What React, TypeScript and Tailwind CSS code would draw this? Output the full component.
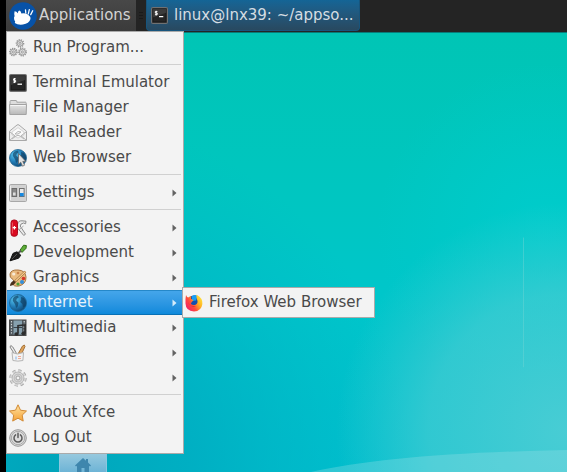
import type { ReactNode } from "react";

function Svg({ children, size = 18 }: { children: ReactNode; size?: number }) {
  return (
    <svg width={size} height={size} viewBox="0 0 18 18" className="shrink-0" aria-hidden="true">
      {children}
    </svg>
  );
}

function Cog({ x, y, r }: { x: number; y: number; r: number }) {
  return (
    <g fill="none" stroke="#949494">
      <circle cx={x} cy={y} r={r} strokeWidth="1.6" strokeDasharray="1.2 0.9" />
      <circle cx={x} cy={y} r={r - 0.7} fill="#dcdcdc" strokeWidth="0.8" />
      <circle cx={x} cy={y} r="1" fill="#f8f8f8" strokeWidth="0.9" />
    </g>
  );
}

const RunIcon = () => (
  <Svg>
    <Cog x={11} y={4.4} r={3.5} />
    <Cog x={4.4} y={13} r={3.5} />
    <Cog x={13.4} y={13} r={3.7} />
  </Svg>
);

const TerminalIcon = ({ size = 18 }: { size?: number }) => (
  <Svg size={size}>
    <rect x="0.5" y="0.5" width="17" height="17" rx="1" fill="#555" stroke="#747474" />
    <rect x="2" y="2" width="14" height="14" fill="#252525" stroke="#171717" />
    <path d="M2 2h14v4L2 11z" fill="#454545" opacity="0.7" />
    <path d="M6.8 4.8H4.6v1.6h2v1.7H4.2M5.5 4v5" fill="none" stroke="#fff" strokeWidth="1" />
    <path d="M8.5 10.2h4.5" stroke="#fff" strokeWidth="1.3" />
  </Svg>
);

const FolderIcon = () => (
  <Svg>
    <defs>
      <linearGradient id="folder" x2="0" y2="1">
        <stop stopColor="#e5e5e5" />
        <stop offset="1" stopColor="#b8b8b8" />
      </linearGradient>
    </defs>
    <path d="M1 7V2.5q0-1 1-1h5q.8 0 .8 1v.7h8.7q.7 0 .7 1V7" fill="#ddd" stroke="#a3a3a3" />
    <path d="M.5 5.5h17l-.3 10H.8z" fill="url(#folder)" stroke="#a3a3a3" />
    <path d="M1.5 6.5h15" stroke="#f5f5f5" />
  </Svg>
);

const MailIcon = () => (
  <Svg>
    <path d="M.5 7.2 8 1q1-.7 2 0l7.5 6.2v9.3H.5z" fill="#eee" stroke="#a8a8a8" />
    <path d="M3 8 8.5 4h1L15 8v3l-6 3-6-3z" fill="#fafafa" stroke="#ccc" strokeWidth="0.8" />
    <path d="m1 8 5 3.8L1 16m16-8-5 3.8L17 16M3 15l4-3q2-1.2 4 0l4 3M6 10q3-4 6-2-3 3-6 2Z" fill="none" stroke="#b5b5b5" />
  </Svg>
);

const Globe = () => (
  <>
    <defs>
      <radialGradient id="globe" cx="0.3" cy="0.28" r="0.85">
        <stop stopColor="#58c8f2" />
        <stop offset="0.5" stopColor="#237fb9" />
        <stop offset="1" stopColor="#0b3d68" />
      </radialGradient>
    </defs>
    <circle cx="9" cy="9" r="8.5" fill="url(#globe)" stroke="#1d638f" strokeWidth="0.8" />
    <path d="M5.5 2.5 9 1.6l.7 2-2 1.2-.4 2 2.2 2-.8 3.8-1.6 1.4-.9-3.6-2.4-3.6.2-2.4zM12 3l3 1 2 4-.5 4-2.4 1.6-.7-3.6-2.2-2 1-2.4z" fill="#103d61" opacity="0.65" />
  </>
);

const WebIcon = () => (
  <Svg>
    <Globe />
    <path d="M9.5 4.5v10.7l2.2-2 1.8 4 2.1-1-1.8-3.8h3z" fill="#e2e2e2" stroke="#666" strokeWidth="0.8" />
  </Svg>
);

const InternetIcon = () => (
  <Svg>
    <Globe />
  </Svg>
);

const SettingsIcon = () => (
  <Svg>
    <rect x="0.5" y="0.5" width="17" height="17" rx="1" fill="#d2d2d2" stroke="#a8a8a8" />
    <path d="M1.5 2v14" stroke="#eee" />
    <rect x="3" y="4.5" width="4.6" height="8" fill="#888" stroke="#6b6b6b" />
    <path d="M4 8.5h2.6v3H4z" fill="#ddd" />
    <rect x="10.5" y="4.5" width="4.6" height="8" fill="#e9e9e9" stroke="#707070" />
    <path d="M11 9h3.7v3.3H11z" fill="#1688df" />
  </Svg>
);

const AccessoriesIcon = () => (
  <Svg>
    <path d="M8.5 5.5Q9 1.5 13 1.8l4 .4-.4 2.6-2-.8q-3.4.6-3.4 3l5.3 8.2-1.8 1.2L8.5 9" fill="#eaeaea" stroke="#8b8b8b" />
    <path d="M10 11q2-2 4.5-4" stroke="#aaa" fill="none" />
    <rect x="2" y="1" width="6.5" height="16.3" rx="2.8" fill="#da0a20" stroke="#a80a1c" />
    <path d="M3.4 3.5v11" stroke="#f05560" />
    <path d="M5.4 7v3.4M3.7 8.7h3.4" stroke="#fff" strokeWidth="1.2" />
  </Svg>
);

const DevelopmentIcon = () => (
  <Svg>
    <path d="m11 6.2 3.6-5 2.8.4-.4 2.8-4 4z" fill="#5fae38" stroke="#2f6d18" />
    <path d="m9 9.2 3-2.4" stroke="#555" strokeWidth="2" />
    <path d="M1 16.8 4 9.4l4-1.6 3.8 3.4-2.2 3z" fill="#1d1d1d" stroke="#111" />
    <path d="m3 15 5-5" stroke="#666" strokeWidth="0.7" />
  </Svg>
);

const GraphicsIcon = () => (
  <Svg>
    <path d="M1 5q1-4.5 8-4 7.5.4 8 7 .3 7-7 9-6 .8-6-2.5 2-2 0-4Q.2 8.7 1 5Z" fill="#e9bb80" stroke="#a87440" />
    <circle cx="4.7" cy="5" r="1.6" fill="#f7ead9" />
    <circle cx="9" cy="4" r="1.3" fill="#c98149" />
    <circle cx="14.5" cy="9.5" r="1.8" fill="#d63628" />
    <circle cx="13" cy="13" r="2" fill="#318edb" />
    <circle cx="9" cy="15" r="1.6" fill="#4a9c32" />
    <path d="M1 17q0-4 4-5.5l1.8 2Q5 16.500 1 17Z" fill="#4a2f1c" />
    <path d="m6 12.500 10.500-10" stroke="#885a2c" strokeWidth="2.2" />
    <path d="m6.500 12 10-9.500" stroke="#ffd391" strokeWidth="1.1" />
  </Svg>
);

const MultimediaIcon = () => (
  <Svg>
    <rect x="0.5" y="1" width="16.5" height="15.500" fill="#4d565c" stroke="#4a4a4a" />
    <path d="M4.500 1.500h8.500v14H4.500z" fill="#86a0ae" />
    <path d="M4.500 8.500h8.500" stroke="#39444c" />
    <path d="M2.500 2v14M15.200 2v14" stroke="#d0d6d8" strokeWidth="1.200" strokeDasharray="1.4 1.4" />
    <path d="M9 14.500V6.800l7-1v8.200" fill="none" stroke="#2c2c2c" strokeWidth="1.600" />
    <ellipse cx="7.500" cy="15" rx="2.200" ry="1.800" fill="#2c2c2c" />
    <ellipse cx="14.500" cy="14.500" rx="2.200" ry="1.800" fill="#2c2c2c" />
  </Svg>
);

const OfficeIcon = () => (
  <Svg>
    <path d="M5.500 10 1 3l.8-1.500L3.800 3l4 7" fill="#eee" stroke="#858585" />
    <path d="m9 10 4.500-8 1.800-1 .7 1.500L12.500 10" fill="#dfa35a" stroke="#a5743c" />
    <path d="M3 8.500 8.500 10l6-1.500-.6 8q-5 1.300-10 0z" fill="#f2f2f2" stroke="#b5b5b5" />
    <path d="M6 12.500h2v3H6z" fill="#b9d2ee" />
    <path d="M9 12.500h3M9 14.500h3" stroke="#f0ac98" />
  </Svg>
);

const SystemIcon = () => (
  <Svg>
    <circle cx="9" cy="9" r="7" fill="none" stroke="#a8a8a8" strokeWidth="3.4" strokeDasharray="3 2.5" />
    <circle cx="9" cy="9" r="7" fill="none" stroke="#d8d8d8" strokeWidth="1.8" strokeDasharray="3 2.5" />
    <circle cx="9" cy="9" r="6" fill="#d8d8d8" stroke="#b0b0b0" strokeWidth="0.8" />
    <circle cx="9" cy="9" r="3.9" fill="none" stroke="#bdbdbd" />
    <circle cx="9" cy="9" r="2" fill="#f3f3f3" stroke="#a2a2a2" />
  </Svg>
);

const StarIcon = () => (
  <Svg>
    <defs>
      <linearGradient id="star" x2="0" y2="1">
        <stop stopColor="#ffe3a2" />
        <stop offset="1" stopColor="#f6a236" />
      </linearGradient>
    </defs>
    <path d="m9 .8 2.5 5.4 6 .8-4.3 4.1 1 6L9 14.2l-5.3 2.9 1-6L.5 7l6-.8z" fill="url(#star)" stroke="#d18a35" strokeLinejoin="round" />
  </Svg>
);

const PowerIcon = () => (
  <Svg>
    <circle cx="9" cy="9" r="8.3" fill="#dcdcdc" stroke="#989898" />
    <circle cx="9" cy="9" r="6.7" fill="#ddd" stroke="#a8a8a8" />
    <path d="M6.6 5.9a4 4 0 1 0 4.8 0M9 4.200v4.300" fill="none" stroke="#5c5c5c" strokeWidth="1.500" strokeLinecap="round" />
  </Svg>
);

const FirefoxIcon = () => (
  <Svg>
    <defs>
      <linearGradient id="fox" x1="1" x2="0" y1="0.1" y2="0.8">
        <stop stopColor="#fff044" />
        <stop offset="0.35" stopColor="#ffb222" />
        <stop offset="0.65" stopColor="#ff4a3b" />
        <stop offset="1" stopColor="#ee1c6c" />
      </linearGradient>
    </defs>
    <circle cx="9" cy="8.500" r="7" fill="#144fae" />
    <path d="M7 2q3-2 5.500-.3L11 6.500 7 7z" fill="#159df5" />
    <path d="M1 1q1 2.500 2.400 2.600Q5 2 6.300 2.200L6 4.800l2.500 1.400L6.800 8l-1 1.700q2 2.200 5.200.7 2.500-2 1-5-.8-2-.5-4.700Q18 4 17.400 10q-1 7.200-8.400 7.500Q.8 17 .5 9.500.2 5 1 1Z" fill="url(#fox)" />
    <path d="M3 8q2 5.500 8 4-4 3-8-4Z" fill="#dc2b36" />
  </Svg>
);

const MouseLogo = () => (
  <svg width="28" height="28" viewBox="0 0 28 28" className="shrink-0" aria-hidden="true">
    <circle cx="14" cy="14" r="13.8" fill="#0752a7" />
    <path
      d="M5.600 9.200q2 .2 3.200 2 .2-2.200 1.600-2.600 1.600.6 2 2.800 4-.6 6.800 1.300 2.800 2 2.300 4.400-1.500 4.700-7.500 5.400-5.200.6-8.200-1.400 1-1.600-.5-3.200-.8-2.200.3-3.900-.6-2.600 0-4.800Z"
      fill="#fff"
    />
    <path d="m16.800 11-.3-3M19.300 11.800l1-4.200M21.700 12.600l2-3.800" stroke="#fff" strokeWidth="1.300" strokeLinecap="round" />
  </svg>
);

type Entry = { label: string; icon: ReactNode; sub?: boolean };

const groups: Entry[][] = [
  [{ label: "Run Program...", icon: <RunIcon /> }],
  [
    { label: "Terminal Emulator", icon: <TerminalIcon /> },
    { label: "File Manager", icon: <FolderIcon /> },
    { label: "Mail Reader", icon: <MailIcon /> },
    { label: "Web Browser", icon: <WebIcon /> },
  ],
  [{ label: "Settings", icon: <SettingsIcon />, sub: true }],
  [
    { label: "Accessories", icon: <AccessoriesIcon />, sub: true },
    { label: "Development", icon: <DevelopmentIcon />, sub: true },
    { label: "Graphics", icon: <GraphicsIcon />, sub: true },
    { label: "Internet", icon: <InternetIcon />, sub: true },
    { label: "Multimedia", icon: <MultimediaIcon />, sub: true },
    { label: "Office", icon: <OfficeIcon />, sub: true },
    { label: "System", icon: <SystemIcon />, sub: true },
  ],
  [
    { label: "About Xfce", icon: <StarIcon /> },
    { label: "Log Out", icon: <PowerIcon /> },
  ],
];

function MenuRow({ label, icon, sub, active }: Entry & { active?: boolean }) {
  return (
    <button
      type="button"
      role="menuitem"
      aria-haspopup={sub ? "menu" : undefined}
      className={`flex h-[25px] w-full items-center gap-1.5 pr-1.5 pl-0.5 text-left whitespace-nowrap ${
        active
          ? "bg-linear-to-b from-[#46a7eb] to-[#0788da] text-[#e8f3fb] shadow-[inset_0_1px_0_#2588c9,inset_0_-1px_0_#0870b5]"
          : "text-[#4a4a4a]"
      }`}
    >
      {icon}
      <span className="grow">{label}</span>
      {sub && (
        <svg width="5" height="8" viewBox="0 0 5 8" className="shrink-0" aria-hidden="true">
          <path d="M.5.5 4.5 4l-4 3.5z" fill={active ? "#d5ecfa" : "#626262"} />
        </svg>
      )}
    </button>
  );
}

function ApplicationsMenu() {
  return (
    <div
      role="menu"
      aria-label="Applications"
      className="absolute top-full left-0 z-10 w-[178px] border border-[#aaa] bg-[#f3f3f3] py-[3px]"
    >
      {groups.map((group, i) => (
        <div key={group[0].label}>
          {i > 0 && (
            <div role="separator" className="mx-0.5 h-2.5 pt-1">
              <div className="h-px bg-[#d0d0d0]" />
            </div>
          )}
          {group.map((entry) =>
            entry.label === "Internet" ? (
              <div key={entry.label} className="relative">
                <MenuRow {...entry} active />
                <div
                  role="menu"
                  aria-label="Internet"
                  className="absolute -top-[3px] left-[175px] w-[193px] border border-[#aaa] bg-[#f3f3f3] py-0.5"
                >
                  <MenuRow label="Firefox Web Browser" icon={<FirefoxIcon />} />
                </div>
              </div>
            ) : (
              <MenuRow key={entry.label} {...entry} />
            ),
          )}
        </div>
      ))}
    </div>
  );
}

function Wallpaper() {
  return (
    <svg
      className="absolute inset-0 size-full"
      viewBox="0 0 561 440"
      preserveAspectRatio="none"
      aria-hidden="true"
    >
      <defs>
        <linearGradient id="sky" x1="0" y1="0" x2="0" y2="1">
          <stop stopColor="#00c5b5" />
          <stop offset="0.3" stopColor="#00c6be" />
          <stop offset="0.6" stopColor="#00c6ca" />
          <stop offset="1" stopColor="#00c0cf" />
        </linearGradient>
        <radialGradient id="deep" gradientUnits="userSpaceOnUse" cx="40" cy="450" r="370">
          <stop stopColor="#00a4ba" />
          <stop offset="0.4" stopColor="#00abc0" stopOpacity="0.8" />
          <stop offset="1" stopColor="#00b6c4" stopOpacity="0" />
        </radialGradient>
        <radialGradient id="bright" gradientUnits="userSpaceOnUse" cx="540" cy="200" r="170">
          <stop stopColor="#00cfd0" stopOpacity="0.7" />
          <stop offset="1" stopColor="#00cdce" stopOpacity="0" />
        </radialGradient>
        <radialGradient id="glow" gradientUnits="userSpaceOnUse" cx="560" cy="400" r="230">
          <stop stopColor="#50ced5" stopOpacity="0.9" />
          <stop offset="0.6" stopColor="#4accd3" stopOpacity="0.65" />
          <stop offset="1" stopColor="#45cad2" stopOpacity="0" />
        </radialGradient>
      </defs>
      <path d="M0 0h561v440H0z" fill="url(#sky)" />
      <path d="M0 0h561v440H0z" fill="url(#deep)" />
      <path d="M0 0h561v440H0z" fill="url(#bright)" />
      <path d="M0 0h561v440H0z" fill="url(#glow)" />
      <path d="M305 440Q390 421 561 418v22z" fill="#a0e0e8" opacity="0.3" />
      <path d="M517.500 205v130" stroke="#70d5d5" opacity="0.45" />
    </svg>
  );
}

export default function App() {
  return (
    <div className="flex min-h-screen flex-col bg-black pl-1.5 font-['DejaVu_Sans',sans-serif] text-[15px] leading-[25px]">
      <header className="relative z-10 flex h-[33px] items-start border-b border-[#087b79] bg-[#242424]">
        <div className="relative">
          <button
            type="button"
            aria-expanded="true"
            className="flex h-[31px] w-[130px] items-center gap-0.5 bg-linear-to-b from-[#484848] to-[#3b3b3b] pl-[3px] text-[#d3d3d3]"
          >
            <MouseLogo />
            <span>Applications</span>
          </button>
          <ApplicationsMenu />
        </div>
        <div className="flex h-[31px] w-2.5 flex-col items-center justify-center gap-0.5">
          <span className="h-px w-1 bg-[#1a1a1a]" />
          <span className="h-px w-1 bg-[#1a1a1a]" />
          <span className="h-px w-1 bg-[#1a1a1a]" />
        </div>
        <button
          type="button"
          className="flex h-[31px] w-[214px] items-center gap-1.5 rounded-b-sm border-x border-b border-[#17557d] bg-linear-to-b from-[#146596] to-[#284960] pl-1 text-[#d5dde3]"
        >
          <TerminalIcon size={17} />
          <span className="whitespace-nowrap">linux@lnx39: ~/appso...</span>
        </button>
      </header>
      <main className="relative flex grow flex-col justify-end">
        <Wallpaper />
        <nav aria-label="Dock" className="relative flex pl-[53px]">
          <button
            type="button"
            aria-label="Home"
            className="flex h-5 w-12 justify-center border-x border-[#8cc7df] bg-linear-to-b from-[#9bcbdf] to-[#6db4d6] pt-1.5"
          >
            <svg width="16" height="14" viewBox="0 0 16 14" aria-hidden="true">
              <path d="M0 7.5 8 0l3 2.700V1h2v3.600l3 2.900-1 1-1-.8V14H9.500v-4h-3v4H2V7.700l-1 .8z" fill="#3e86ad" />
            </svg>
          </button>
        </nav>
      </main>
    </div>
  );
}
